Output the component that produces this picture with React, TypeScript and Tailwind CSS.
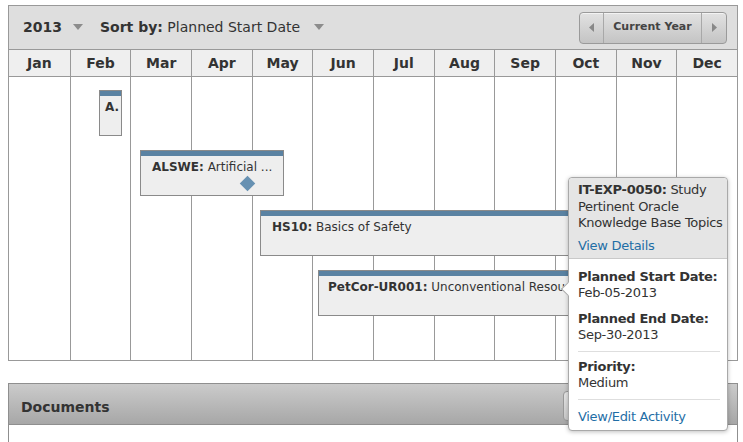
import React from "react";

const months = ["Jan", "Feb", "Mar", "Apr", "May", "Jun", "Jul", "Aug", "Sep", "Oct", "Nov", "Dec"];

interface BarProps {
    code: string;
    title?: string;
    className: string;
    pad: string;
    diamond?: boolean;
}

const Bar: React.FC<BarProps> = ({ code, title, className, pad, diamond }) => {
    return (
        <div className={`absolute h-[46px] border border-[#8a8a8a] bg-[#eeeeee] overflow-hidden ${className}`}>
            <div className="h-[5px] bg-[#5a82a2]"></div>
            <div className={`${pad} pt-[3px] text-[12px] leading-[16px] text-[#333] whitespace-nowrap`}>
                <span className="font-bold">{code}</span>
                {title && <span> {title}</span>}
            </div>
            {diamond && (
                <div className="absolute left-[101px] top-[27px] w-[11px] h-[11px] rotate-45 bg-[#6791b2]"></div>
            )}
        </div>
    );
};

const Caret = () => (
    <svg width="10" height="6" viewBox="0 0 10 6" className="inline-block">
        <path d="M0 0 L10 0 L5 6 Z" fill="#8c8c8c" />
    </svg>
);

export default function App() {
    return (
        <div className="relative w-[743px] h-[442px] overflow-hidden bg-white font-['DejaVu_Sans',sans-serif] text-[#333]">
            <div className="ml-2 mt-[5px] w-[730px] border border-[#999]">
                {/* toolbar */}
                <div className="h-[44px] bg-[#dedede] border-b border-[#999] flex items-center pl-[14px] pr-[10px]">
                    <span className="font-bold text-[14px]">2013</span>
                    <span className="ml-[11px] mb-[2px]"><Caret /></span>
                    <span className="ml-[17px] text-[14px]"><span className="font-bold">Sort by:</span> Planned Start Date</span>
                    <span className="ml-[14px] mb-[2px]"><Caret /></span>
                    <div className="ml-auto flex h-[32px] rounded-[4px] border border-[#9a9a9a] bg-gradient-to-b from-[#e2e2e2] to-[#c4c4c4] shadow-[inset_0_1px_0_#f3f3f3]">
                        <div className="w-[24px] flex items-center justify-center border-r border-[#a8a8a8]">
                            <svg width="5" height="9" viewBox="0 0 5 9"><path d="M5 0 L0 4.5 L5 9 Z" fill="#888" /></svg>
                        </div>
                        <div className="w-[97px] flex items-center justify-center text-[11px] font-bold text-[#444]">Current Year</div>
                        <div className="w-[25px] flex items-center justify-center border-l border-[#a8a8a8]">
                            <svg width="5" height="9" viewBox="0 0 5 9"><path d="M0 0 L5 4.5 L0 9 Z" fill="#888" /></svg>
                        </div>
                    </div>
                </div>
                {/* months */}
                <div className="grid grid-cols-12 h-[27px] bg-[#efefef] border-b border-[#999]">
                    {months.map((m, i) => (
                        <div key={m} className={`flex items-center justify-center pt-[1px] text-[14px] font-bold text-[#333] ${i > 0 ? "border-l border-[#999]" : ""}`}>{m}</div>
                    ))}
                </div>
                {/* body */}
                <div className="relative h-[283px]">
                    <div className="grid grid-cols-12 h-full">
                        {months.map((m, i) => (
                            <div key={m} className={i > 0 ? "border-l border-[#999]" : ""}></div>
                        ))}
                    </div>
                    <Bar code="A." pad="pl-[5px]" className="left-[90px] top-[13px] w-[23px]" />
                    <Bar code="ALSWE:" title="Artificial ..." pad="pl-[11px]" diamond className="left-[131px] top-[73px] w-[144px]" />
                    <Bar code="HS10:" title="Basics of Safety" pad="pl-[11px]" className="left-[251px] top-[133px] w-[320px]" />
                    <Bar code="PetCor-UR001:" title="Unconventional Resources" pad="pl-[9px]" className="left-[309px] top-[193px] w-[300px]" />
                </div>
            </div>

            {/* documents panel */}
            <div className="ml-2 mt-[22px] w-[730px] border border-[#8f8f8f] border-b-0">
                <div className="h-[41px] bg-gradient-to-b from-[#cbcbcb] to-[#a7a7a7] border-b border-[#8f8f8f] flex items-center pt-[6px] pl-[12px] relative">
                    <span className="text-[14px] font-bold text-[#333]">Documents</span>
                    <div className="absolute left-[554px] top-[7px] w-[120px] h-[30px] rounded-[4px] border border-[#999] bg-gradient-to-b from-[#e6e6e6] to-[#c9c9c9]"></div>
                </div>
                <div className="h-[30px] bg-white"></div>
            </div>

            {/* tooltip */}
            <div className="absolute left-[568px] top-[177px] w-[160px] h-[254px] rounded-[4px] border border-[#a9a9a9] bg-white shadow-[0_1px_4px_rgba(0,0,0,0.25)] text-[13px] leading-[16.5px] tracking-[-0.3px] text-[#333]">
                <div className="absolute -left-[6px] top-[106px] w-[10px] h-[10px] rotate-45 bg-white border-l border-b border-[#a9a9a9]"></div>
                <div className="relative bg-[#e5e5e5] rounded-t-[4px] border-b border-[#c9c9c9] pl-[9px] pr-[2px] pt-[4px] h-[81px]">
                    <div><span className="font-bold">IT-EXP-0050:</span> Study Pertinent Oracle Knowledge Base Topics</div>
                    <div className="mt-[6px] text-[#1f6ea6]">View Details</div>
                </div>
                <div className="relative pl-[9px] pr-[7px] pt-[10px] leading-[16px] whitespace-nowrap">
                    <div className="font-bold">Planned Start Date:</div>
                    <div>Feb-05-2013</div>
                    <div className="font-bold mt-[10px]">Planned End Date:</div>
                    <div>Sep-30-2013</div>
                    <div className="border-t border-[#dedede] mt-[8px]"></div>
                    <div className="font-bold mt-[7px]">Priority:</div>
                    <div>Medium</div>
                    <div className="border-t border-[#dedede] mt-[8px]"></div>
                    <div className="mt-[9px] text-[#1f6ea6]">View/Edit Activity</div>
                </div>
            </div>
        </div>
    );
}
